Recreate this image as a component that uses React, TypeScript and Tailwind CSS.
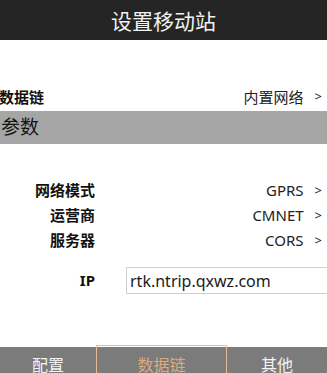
const font = { fontFamily: '"Noto Sans", "Noto Sans CJK SC", sans-serif' };

const params = [
  { label: "网络模式", value: "GPRS" },
  { label: "运营商", value: "CMNET" },
  { label: "服务器", value: "CORS" },
];

function Arrow() {
  return <span className="ml-[11px] mr-[5px] text-[13px] text-[#222]">&gt;</span>;
}

export default function App() {
  return (
    <div className="flex h-[373px] w-[327px] flex-col overflow-hidden bg-white" style={font}>
      {/* title bar */}
      <div className="flex h-[40px] shrink-0 items-center justify-center bg-[#252525] pt-[3px] text-[21px] text-[#f2f2f2]">
        设置移动站
      </div>

      {/* data link */}
      <div className="mt-[46px] flex h-[25px] shrink-0 items-center justify-between pb-[3px]">
        <span className="-ml-[1px] text-[15px] font-bold text-[#111]">数据链</span>
        <div className="flex items-center text-[15px] text-[#222]">
          内置网络
          <Arrow />
        </div>
      </div>

      {/* section header */}
      <div className="flex h-[33px] shrink-0 items-center bg-[#a6a6a6] pl-[1px] text-[19px] text-[#151515]">
        参数
      </div>

      <div className="mt-[34px] flex shrink-0 flex-col">
        {params.map((p) => (
          <div key={p.label} className="flex h-[25px] items-center">
            <span className="w-[95px] text-right text-[15px] font-bold text-[#111]">{p.label}</span>
            <div className="flex flex-1 items-center justify-end text-[15px] text-[#222]">
              {p.value}
              <Arrow />
            </div>
          </div>
        ))}
      </div>

      {/* IP */}
      <div className="mt-[14px] flex h-[27px] shrink-0 items-center">
        <span className="w-[95px] text-right text-[15px] font-bold text-[#111]">IP</span>
        <div className="ml-[31px] flex h-full flex-1 items-center border border-r-0 border-[#cfcfcf] pl-[3px] text-[16px] text-[#1a1a1a]">
          rtk.ntrip.qxwz.com
        </div>
      </div>

      <div className="flex-1" />

      {/* bottom tabs */}
      <div className="flex h-[26px] shrink-0 bg-[#7b7b7b] text-[16px] leading-[20px]">
        <div className="w-[96px] pt-[8px] text-center text-[#f4f4f4]">配置</div>
        <div className="-mt-[2px] h-[28px] w-[131px] border-[1.5px] border-b-0 border-[#e7b994] pt-[9px] text-center text-[#dcaa80]">
          数据链
        </div>
        <div className="flex-1 pt-[8px] text-center text-[#f4f4f4]">其他</div>
      </div>
    </div>
  );
}
